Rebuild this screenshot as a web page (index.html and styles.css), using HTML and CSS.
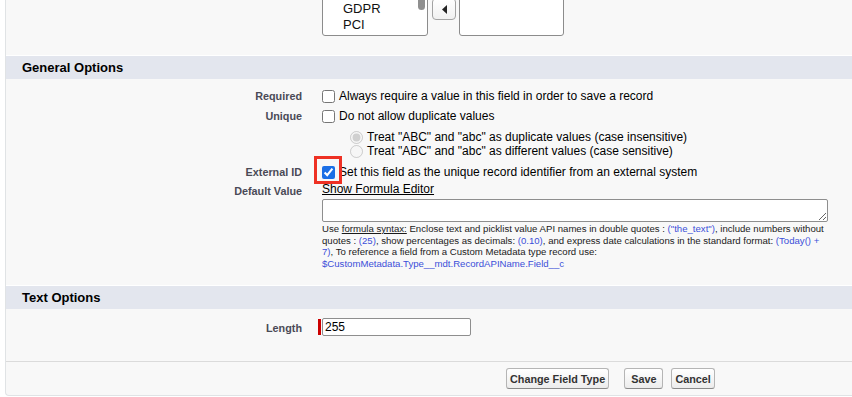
FILE: index.html
```html
<!DOCTYPE html>
<html lang="en">
<head>
<meta charset="utf-8">
<title>Field Edit</title>
<link rel="stylesheet" href="styles.css">
</head>
<body>
<div class="block">
  <div class="picklist-area">
    <div class="picklist-row">
      <div class="listbox listbox-left">
        <div class="listbox-options">
          <div class="opt">GDPR</div>
          <div class="opt">PCI</div>
        </div>
        <div class="scroll-thumb"></div>
      </div>
      <div class="arrows">
        <button class="arrow-btn" type="button" aria-label="Add">
          <svg width="5" height="9" viewBox="0 0 5 9"><path d="M0 0 L5 4.5 L0 9 Z" fill="#222"/></svg>
        </button>
        <button class="arrow-btn" type="button" aria-label="Remove">
          <svg width="5" height="9" viewBox="0 0 5 9"><path d="M5 0 L0 4.5 L5 9 Z" fill="#222"/></svg>
        </button>
      </div>
      <div class="listbox listbox-right"></div>
    </div>
  </div>

  <h3 class="subheader">General Options</h3>
  <div class="section section-general">
    <div class="row row-check">
      <div class="label">Required</div>
      <div class="data"><label class="check"><input type="checkbox" class="cb"><span>Always require a value in this field in order to save a record</span></label></div>
    </div>
    <div class="row row-check">
      <div class="label">Unique</div>
      <div class="data"><label class="check"><input type="checkbox" class="cb"><span>Do not allow duplicate values</span></label></div>
    </div>
    <div class="row">
      <div class="label"></div>
      <div class="data radio-group">
        <label class="radio"><input type="radio" name="case" class="rb" checked disabled><span>Treat "ABC" and "abc" as duplicate values (case insensitive)</span></label>
        <label class="radio"><input type="radio" name="case" class="rb" disabled><span>Treat "ABC" and "abc" as different values (case sensitive)</span></label>
      </div>
    </div>
    <div class="row row-check">
      <div class="label">External ID</div>
      <div class="data"><label class="check"><span class="highlight-wrap"><input type="checkbox" class="cb" checked><span class="highlight"></span></span><span>Set this field as the unique record identifier from an external system</span></label></div>
    </div>
    <div class="row row-default">
      <div class="label label-default">Default Value</div>
      <div class="data">
        <a class="formula-link" href="#">Show Formula Editor</a>
        <textarea class="formula-box"></textarea>
        <div class="help">Use <a class="help-link" href="#">formula syntax:</a> Enclose text and picklist value API names in double quotes : <span class="blue">("the_text")</span>, include numbers without quotes : <span class="blue">(25)</span>, show percentages as decimals: <span class="blue">(0.10)</span>, and express date calculations in the standard format: <span class="blue">(Today() +</span> <span class="blue">7)</span>, To reference a field from a Custom Metadata type record use: <span class="blue">$CustomMetadata.Type__mdt.RecordAPIName.Field__c</span></div>
      </div>
    </div>
  </div>

  <h3 class="subheader">Text Options</h3>
  <div class="section section-text">
    <div class="row row-length">
      <div class="label">Length</div>
      <div class="data"><span class="required-input"><span class="required-bar"></span><input type="text" class="text-input" value="255"></span></div>
    </div>
  </div>

  <div class="bottom-buttons">
    <button class="btn btn-change" type="button">Change Field Type</button>
    <button class="btn btn-save" type="button">&nbsp;Save&nbsp;</button>
    <button class="btn" type="button">Cancel</button>
  </div>
</div>
</body>
</html>
```
FILE: styles.css
```css
* { box-sizing: border-box; }
html, body { margin: 0; padding: 0; background: #fff; }
body {
  font-family: "Liberation Sans", Arial, sans-serif;
  font-size: 12px;
  color: #000;
}

.block {
  margin-left: 5px;
  background: #f8f8f8;
  border-left: 1px solid #e0e3e5;
  border-bottom: 1px solid #e0e3e5;
  border-bottom-left-radius: 4px;
}

/* multi-select picklist */
.picklist-area {
  height: 55px;
  overflow: hidden;
  padding-left: 316px;
}
.picklist-row {
  display: flex;
  align-items: flex-end;
  height: 76px;
  margin-top: -40px;
}
.listbox {
  position: relative;
  height: 76px;
  background: #fff;
  border: 1px solid #8c8c8c;
  border-radius: 0 0 3px 3px;
}
.listbox-left { width: 106px; }
.listbox-right { width: 105px; }
.listbox-options {
  height: 100%;
  display: flex;
  flex-direction: column;
  justify-content: flex-end;
  padding: 0 0 2px 20px;
  font-size: 13px;
  line-height: 16px;
  color: #111;
}
.scroll-thumb {
  position: absolute;
  top: 19px;
  right: 2px;
  width: 7px;
  height: 30px;
  border-radius: 4px;
  background: #8f8f8f;
}
.arrows {
  display: flex;
  flex-direction: column;
  gap: 4px;
  margin: 0 3px 16px 4px;
}
.arrow-btn {
  width: 24px;
  height: 22px;
  padding: 0;
  display: flex;
  align-items: center;
  justify-content: center;
  border: 1px solid #a3a3a3;
  border-radius: 4px;
  background: linear-gradient(#ffffff, #f1f1f1);
}

/* section headers */
.subheader {
  margin: 0;
  height: 24px;
  border-top: 1px solid #fff;
  background: #e3e6ee;
  padding-left: 16px;
  font-size: 13px;
  font-weight: bold;
  line-height: 23px;
  color: #000;
}

/* rows */
.section-general { padding: 7px 0 16px; }
.section-text { padding: 10px 0 24px; }
.row { display: flex; }
.label {
  width: 316px;
  flex: none;
  padding-right: 20px;
  text-align: right;
  font-size: 10.8px;
  font-weight: bold;
  color: #4a4a56;
}
.data { flex: 1; min-width: 0; }

.row-check { height: 20px; align-items: center; }
.check {
  display: flex;
  align-items: center;
  gap: 4px;
  white-space: nowrap;
}
.cb {
  width: 13px;
  height: 13px;
  margin: 0;
  accent-color: #1b6fe6;
}
.highlight-wrap { position: relative; display: inline-flex; }
.highlight {
  position: absolute;
  left: -8px;
  top: -10px;
  width: 28px;
  height: 28px;
  border: 3px solid #ee3124;
}

.radio-group { padding: 4px 0 4px 28px; }
.radio {
  height: 14px;
  display: flex;
  align-items: center;
  gap: 4px;
  white-space: nowrap;
}
.rb { width: 13px; height: 13px; margin: 0; }

.label-default { line-height: 15px; padding-top: 2px; }
.formula-link {
  display: block;
  width: max-content;
  line-height: 15px;
  color: #000;
  text-decoration: underline;
}
.formula-box {
  display: block;
  width: 506px;
  height: 23px;
  margin: 2px 0 1px;
  border: 1px solid #8e8e8e;
  border-radius: 2px;
  background: #fff;
  font: inherit;
}
.help {
  width: 506px;
  font-size: 9.6px;
  line-height: 11.6px;
  color: #1a1a1a;
}
.help-link { color: #1a1a1a; text-decoration: underline; }
.blue { color: #3b4fd8; }

/* length */
.row-length { height: 18px; align-items: center; }
.required-input { display: inline-flex; align-items: center; gap: 1px; margin-left: -4px; }
.required-bar { width: 3px; height: 16px; background: #c00; }
.text-input {
  width: 149px;
  height: 18px;
  padding: 0 2px;
  border: 1px solid #8e8e8e;
  border-radius: 2px;
  background: #fff;
  font-family: inherit;
  font-size: 12px;
  color: #000;
}

/* bottom buttons */
.bottom-buttons {
  height: 34px;
  border-top: 1px solid #dbdbdb;
  padding: 6px 0 0 500px;
  display: flex;
  align-items: flex-start;
}
.btn {
  height: 21px;
  padding: 0 3px;
  border: 1px solid #b5b5b5;
  border-bottom-color: #8a8a8a;
  border-radius: 3px;
  background: linear-gradient(#ffffff, #ececec);
  font-family: inherit;
  font-size: 10.8px;
  font-weight: bold;
  color: #333;
}
.btn-change { margin-right: 15px; }
.btn-save { margin-right: 8px; }
```
